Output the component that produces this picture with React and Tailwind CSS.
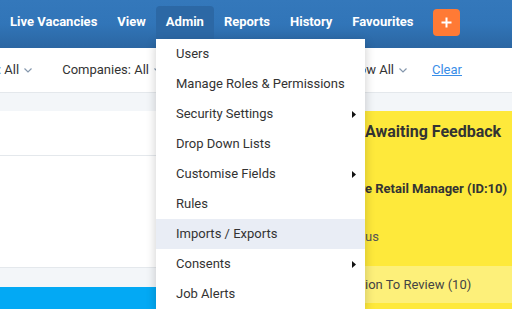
import React from 'react';

const Chevron = () => (
    <svg width="8" height="5" viewBox="0 0 8 5" className="ml-[5px] mt-[1px]">
        <path d="M0.5 0.5 L4 4 L7.5 0.5" stroke="#8597ad" strokeWidth="1.2" fill="none" />
    </svg>
);

const Arrow = () => (
    <svg width="4" height="7" viewBox="0 0 4 7">
        <path d="M0 0 L4 3.5 L0 7Z" fill="#111" />
    </svg>
);

// text whose start is hidden to the left of where the visible part begins
const Cut = ({ pre, children }) => (
    <div className="flex whitespace-nowrap">
        <span className="flex w-0 justify-end">{pre}</span>
        <span>{children}</span>
    </div>
);

const navItems = ['Live Vacancies', 'View', 'Admin', 'Reports', 'History', 'Favourites'];

const menu = [
    { label: 'Users' },
    { label: 'Manage Roles & Permissions' },
    { label: 'Security Settings', sub: true },
    { label: 'Drop Down Lists' },
    { label: 'Customise Fields', sub: true },
    { label: 'Rules' },
    { label: 'Imports / Exports', active: true },
    { label: 'Consents', sub: true },
    { label: 'Job Alerts' },
];

const App = () => {
    return (
        <div className="relative w-[512px] h-[309px] overflow-hidden bg-white font-['Roboto',sans-serif] text-[13px] text-[#333]">
            {/* top nav */}
            <nav className="h-[48px] flex items-start pt-[6px] bg-gradient-to-b from-[#3478bb] via-[#3175b8] to-[#2b66a2]">
                {navItems.map(item => (
                    <div
                        key={item}
                        className={`h-[33px] px-[10px] flex items-center pb-[1px] font-bold text-white whitespace-nowrap ${item === 'Admin' ? 'bg-[#2c68a5] rounded-t-[4px]' : ''}`}
                    >
                        {item}
                    </div>
                ))}
                <button className="ml-[9px] mt-[3px] w-[27px] h-[27px] rounded-[4px] bg-[#ff7a35] flex items-center justify-center">
                    <svg width="11" height="11" viewBox="0 0 11 11">
                        <path d="M5.5 0.5 V10.5 M0.5 5.5 H10.5" stroke="white" strokeWidth="2" />
                    </svg>
                </button>
            </nav>

            {/* filter bar */}
            <div className="h-[44px] flex items-center justify-between">
                <div className="-ml-[2px] flex items-center gap-[30px]">
                    <div className="flex items-center">
                        <Cut pre="Department">: All</Cut>
                        <Chevron />
                    </div>
                    <div className="flex items-center">
                        <span>Companies: All</span>
                        <Chevron />
                    </div>
                </div>
                <div className="flex items-center pr-[50px]">
                    <div className="flex items-center">
                        <span>Show All</span>
                        <Chevron />
                    </div>
                    <a className="ml-[25px] text-[#3a8ee8] underline">Clear</a>
                </div>
            </div>

            <div className="h-[19px] bg-[#f3f6f9] border-t border-[#e4e8ec]" />

            {/* content */}
            <div className="flex h-[198px]">
                <div className="flex-1 flex flex-col">
                    <div className="h-[45px] border-b border-[#e4e8ec]" />
                    <div className="h-[111px]" />
                    <div className="h-[20px] bg-[#f3f6f9] border-t border-[#e4e8ec]" />
                    <div className="flex-1 bg-[#03a9f4]" />
                </div>
                <div className="w-[212px] bg-[#fee93b] pl-[65px] flex flex-col text-[#333]">
                    <div className="mt-[11px] text-[16px] leading-[20px] font-bold">
                        <Cut pre="Jobs ">Awaiting Feedback</Cut>
                    </div>
                    <div className="mt-[38px] leading-[18px] font-bold">
                        <Cut pre="Stor">e Retail Manager (ID:10)</Cut>
                    </div>
                    <div className="mt-[30px] leading-[18px] text-[#555]">
                        <Cut pre="Stat">us</Cut>
                    </div>
                    <div className="mt-[20px] -ml-[65px] pl-[65px] h-[37px] flex items-center bg-[#fdf07a] text-[#444]">
                        <Cut pre="Applicat">ion To Review (10)</Cut>
                    </div>
                </div>
            </div>

            {/* admin dropdown */}
            <div className="absolute left-[156px] top-[39px] w-[209px] bg-white shadow-[0_3px_10px_rgba(0,0,0,0.2)]">
                {menu.map(m => (
                    <div
                        key={m.label}
                        className={`h-[30px] pl-[20px] pr-[9px] flex items-center justify-between whitespace-nowrap ${m.active ? 'bg-[#e9edf5]' : ''}`}
                    >
                        <span>{m.label}</span>
                        {m.sub && <Arrow />}
                    </div>
                ))}
            </div>
        </div>
    );
};

export default App;
